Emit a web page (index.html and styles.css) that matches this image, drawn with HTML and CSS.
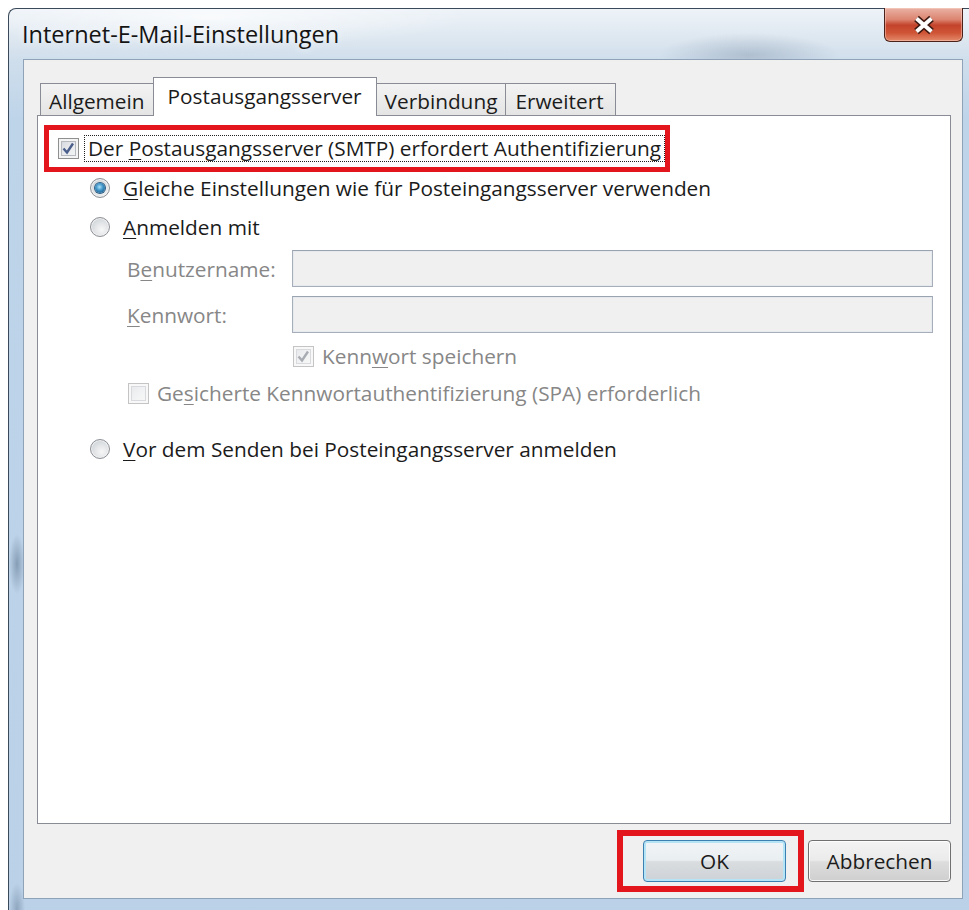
FILE: index.html
```html
<!DOCTYPE html>
<html lang="de">
<head>
<meta charset="utf-8">
<title>Internet-E-Mail-Einstellungen</title>
<link rel="stylesheet" href="styles.css">
</head>
<body>
<div class="window">
  <div class="titlebar">
    <span class="title">Internet-E-Mail-Einstellungen</span>
    <button class="close" aria-label="Schließen">
      <svg width="26" height="22" viewBox="-13 -11 26 22">
        <path d="M-7.5 -6.5 L7.5 6.5 M7.5 -6.5 L-7.5 6.5" stroke="#3e1a12" stroke-width="7" fill="none"/>
        <path d="M-7.5 -6.5 L7.5 6.5 M7.5 -6.5 L-7.5 6.5" stroke="#ffffff" stroke-width="4" fill="none"/>
      </svg>
    </button>
  </div>
  <div class="frame">
    <div class="client">
      <div class="tabs">
        <div class="tab">Allgemein</div>
        <div class="tab active">Postausgangsserver</div>
        <div class="tab">Verbindung</div>
        <div class="tab">Erweitert</div>
      </div>
      <div class="panel">
        <div class="mark">
          <span class="check">
            <svg width="19" height="19" viewBox="0 0 19 19"><path d="M4.5 9.5 L8 13.5 L14 4.5" stroke="#4b5f8c" stroke-width="2.4" fill="none"/></svg>
          </span>
          <span class="focus">Der <u>P</u>ostausgangsserver (SMTP) erfordert Authentifizierung</span>
        </div>
        <div class="options">
          <div class="opt"><span class="radio on"></span><span><u>G</u>leiche Einstellungen wie für Posteingangsserver verwenden</span></div>
          <div class="opt"><span class="radio"></span><span><u>A</u>nmelden mit</span></div>
          <div class="creds">
            <div class="field"><span class="lbl">B<u>e</u>nutzername:</span><span class="input"></span></div>
            <div class="field"><span class="lbl"><u>K</u>ennwort:</span><span class="input"></span></div>
            <div class="cb save">
              <span class="check dim">
                <svg width="19" height="19" viewBox="0 0 19 19"><path d="M4.5 9.5 L8 13.5 L14 4.5" stroke="#a9adb3" stroke-width="2.4" fill="none"/></svg>
              </span>
              <span>Kenn<u>w</u>ort speichern</span>
            </div>
            <div class="cb spa"><span class="check dim"></span><span>Ge<u>s</u>icherte Kennwortauthentifizierung (SPA) erforderlich</span></div>
          </div>
          <div class="opt last"><span class="radio"></span><span><u>V</u>or dem Senden bei Posteingangsserver anmelden</span></div>
        </div>
      </div>
      <div class="buttons">
        <div class="mark-btn"><button class="btn default">OK</button></div>
        <button class="btn">Abbrechen</button>
      </div>
    </div>
  </div>
</div>
</body>
</html>
```
FILE: styles.css
```css
* { box-sizing: border-box; }

html, body {
  margin: 0;
  background: #ffffff;
}

body {
  font-family: "Open Sans", "Noto Sans", sans-serif;
  font-size: 20.8px;
  color: #1b1b1b;
  overflow: hidden;
}

u { text-decoration-thickness: 1px; text-underline-offset: 3px; }

/* glass window frame */
.window {
  margin: 8px 0 0 8px;
  width: 961px;
  height: 902px;
  border-left: 1px solid #3b4a5a;
  border-top: 1px solid #3b4a5a;
  border-top-left-radius: 8px;
  display: flex;
  flex-direction: column;
  background:
    radial-gradient(ellipse 90px 22px at 740px 46px, rgba(110, 130, 155, 0.35), transparent),
    radial-gradient(ellipse 260px 30px at 200px 8px, rgba(255, 255, 255, 0.7), transparent),
    radial-gradient(ellipse 8px 30px at 8px 555px, rgba(90, 115, 140, 0.55), transparent),
    radial-gradient(ellipse 8px 26px at 8px 900px, rgba(90, 115, 140, 0.45), transparent),
    linear-gradient(180deg, #eef3f8 0px, #dde7f0 30px, #cfdeec 52px, #bed4e9 110px, #bad1e8 100%);
}

.titlebar {
  height: 50px;
  flex: none;
  display: flex;
  align-items: center;
  padding-left: 13px;
}

.title {
  font-size: 23.5px;
  color: #141414;
  text-shadow: 0 0 8px rgba(255, 255, 255, 0.9);
}

.close {
  margin-left: auto;
  margin-right: 6px;
  margin-top: -1px;
  align-self: flex-start;
  width: 79px;
  height: 34px;
  padding: 0;
  border: 1px solid #4a2219;
  border-top: none;
  border-radius: 0 0 6px 6px;
  background: linear-gradient(180deg, #e9b2a4 0%, #dc8470 35%, #c4432b 52%, #cf5436 75%, #e38a6a 100%);
  box-shadow: inset 0 0 0 1px rgba(255, 220, 210, 0.45);
  display: flex;
  align-items: center;
  justify-content: center;
}

.frame {
  flex: 1;
  display: flex;
  padding: 0 6px 11px 14px;
}

.client {
  flex: 1;
  display: flex;
  flex-direction: column;
  border: 1px solid #8ea3b8;
  background: #f0f0f0;
  padding: 17px 11px 0 13px;
}

/* tab strip */
.tabs {
  display: flex;
  align-items: flex-end;
  height: 39px;
  margin-bottom: -1px;
  padding-left: 3px;
  position: relative;
  z-index: 1;
  flex: none;
}

.tab {
  height: 32px;
  margin-bottom: 1px;
  margin-right: -1px;
  padding: 2px 8px 0;
  display: flex;
  align-items: center;
  border: 1px solid #898c95;
  border-bottom: none;
  background: linear-gradient(180deg, #f3f3f3, #e4e4e4);
  white-space: nowrap;
}

.tab:last-child { padding: 2px 11px 0 9px; }

.tab.active {
  height: 39px;
  margin-bottom: 0;
  padding: 0 14px 3px;
  background: #ffffff;
}

.panel {
  flex: 1;
  background: #ffffff;
  border: 1px solid #898c95;
}

/* highlighted checkbox row */
.mark {
  display: flex;
  align-items: center;
  width: fit-content;
  height: 47px;
  margin: 9px 0 0 6px;
  padding-left: 9px;
  border: 5px solid #e3151d;
}

.focus {
  margin-left: 5px;
  padding: 0 3px 0 3px;
  border: 1px dotted #202020;
  line-height: 25px;
}

.check {
  width: 21px;
  height: 21px;
  flex: none;
  display: flex;
  align-items: center;
  justify-content: center;
  border: 1px solid #8e8f8f;
  background: linear-gradient(135deg, #cdd2d8 0%, #e6e8eb 45%, #f8f8f8 100%);
  box-shadow: inset 0 0 0 2px #f4f4f4, inset 0 0 0 3px #b5bac1;
}

.check.dim {
  border-color: #c4c4c4;
  background: linear-gradient(135deg, #e4e6e9 0%, #f1f2f3 50%, #f9f9f9 100%);
  box-shadow: inset 0 0 0 2px #f8f8f8, inset 0 0 0 3px #d8dadd;
}

.options {
  padding-left: 52px;
}

.opt {
  display: flex;
  align-items: center;
  gap: 13px;
  height: 32px;
}

.opt + .opt { margin-top: 7px; }
.opt.last { margin-top: 28px; }

.radio {
  width: 20px;
  height: 20px;
  flex: none;
  border-radius: 50%;
  border: 1px solid #8d9197;
  background: radial-gradient(circle at 60% 65%, #f7f7f7 0%, #dcdfe2 55%, #c4c8cd 100%);
  box-shadow: inset 0 0 0 1px #f2f2f2;
  display: flex;
  align-items: center;
  justify-content: center;
}

.radio.on::after {
  content: "";
  width: 10px;
  height: 10px;
  border-radius: 50%;
  background: radial-gradient(circle at 45% 40%, #a9e2fb 0%, #3b8fc4 45%, #154a72 100%);
  box-shadow: 0 0 0 1px #2d5f86;
}

/* disabled credential block */
.creds {
  margin: 7px 17px 0 37px;
  color: #878787;
}

.field {
  display: flex;
  align-items: center;
  height: 37px;
}

.field + .field { margin-top: 9px; }

.lbl {
  width: 165px;
  flex: none;
}

.input {
  flex: 1;
  height: 100%;
  border: 1px solid #a6aeba;
  border-top-color: #9aa3b0;
  background: #f0f0f0;
  box-shadow: inset 0 0 0 1px #e6e9ee;
}

.cb {
  display: flex;
  align-items: center;
  gap: 8px;
  height: 24px;
}

.cb.save {
  margin: 11px 0 0 166px;
}

.cb.spa {
  margin: 13px 0 0 1px;
}

/* dialog buttons */
.buttons {
  height: 74px;
  flex: none;
  display: flex;
  justify-content: flex-end;
  align-items: center;
  gap: 4px;
}

.mark-btn {
  border: 6px solid #e3151d;
  padding: 4px 12px 4px 20px;
}

.btn {
  width: 143px;
  height: 42px;
  padding: 0;
  font: inherit;
  color: #1b1b1b;
  border: 1px solid #707070;
  border-radius: 4px;
  background: linear-gradient(180deg, #f3f3f3 0%, #ebebeb 48%, #dddddd 52%, #cfcfcf 100%);
  box-shadow: inset 0 0 0 1px rgba(255, 255, 255, 0.85);
}

.btn.default {
  border-color: #3c7fb1;
  background: linear-gradient(180deg, #f2f5f7 0%, #e9eef1 48%, #d9dde0 52%, #cdd2d6 100%);
  box-shadow: inset 0 0 0 2px #b5e4f6;
}
```
